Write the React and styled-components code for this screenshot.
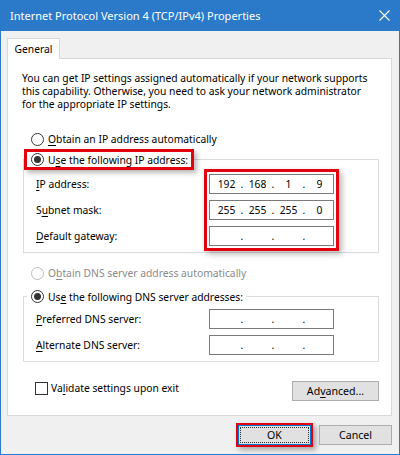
import styled, { createGlobalStyle } from "styled-components"

const GlobalStyle = createGlobalStyle`
  html, body {
    margin: 0;
    padding: 0;
    background: #fff;
  }
  body {
    font-family: "Noto Sans", "Open Sans", sans-serif;
    font-size: 10.3px;
    color: #000;
  }
`

const Window = styled.div`
  width: 400px;
  height: 455px;
  box-sizing: border-box;
  border: 1px solid #2b7ac9;
  border-top: 0;
  background: #f0f0f0;
  display: flex;
  flex-direction: column;
`

const TitleBar = styled.div`
  height: 31px;
  flex: none;
  background: #2b7ac9;
  color: #fff;
  font-size: 11px;
  display: flex;
  align-items: center;
  justify-content: space-between;
  padding: 0 9px 0 9px;
`

const Body = styled.div`
  flex: 1;
  display: flex;
  flex-direction: column;
  padding: 7px 7px 0 6px;
`

const Tab = styled.div`
  align-self: flex-start;
  width: 53px;
  height: 21px;
  box-sizing: border-box;
  margin-bottom: -1px;
  position: relative;
  background: #fff;
  border: 1px solid #d9d9d9;
  border-bottom: 0;
  display: flex;
  align-items: center;
  justify-content: center;
  padding-bottom: 1px;
`

const Panel = styled.div`
  height: 358px;
  box-sizing: border-box;
  background: #fff;
  border: 1px solid #d9d9d9;
  padding: 13px 12px 0 14px;
  display: flex;
  flex-direction: column;
  white-space: nowrap;
`

const Description = styled.p`
  margin: 0;
  line-height: 13px;
`

const Option = styled.label`
  display: flex;
  align-items: center;
  gap: ${p => p.$gap || 4}px;
  height: 16px;
  padding-left: ${p => p.$indent ?? 9}px;
  margin-top: ${p => p.$top || 0}px;
  color: ${p => (p.$disabled ? "#8a8a8a" : "#000")};
`

const Radio = styled.span`
  flex: none;
  width: 13px;
  height: 13px;
  box-sizing: border-box;
  border-radius: 50%;
  border: 1px solid ${p => (p.$disabled ? "#bcbcbc" : "#333")};
  background: #fff;
  display: flex;
  align-items: center;
  justify-content: center;
  &::after {
    content: "";
    display: ${p => (p.$checked ? "block" : "none")};
    width: 7px;
    height: 7px;
    border-radius: 50%;
    background: #333;
  }
`

const Check = styled.span`
  flex: none;
  width: 13px;
  height: 13px;
  box-sizing: border-box;
  border: 1px solid #333;
  background: #fff;
`

const Key = styled.u`
  text-decoration-thickness: 1px;
  text-underline-offset: 2px;
`

const Group = styled.fieldset`
  margin: ${p => p.$top || 0}px 0 0 1px;
  padding: ${p => p.$padTop || 7}px 12px 6px 12px;
  border: 1px solid #dcdcdc;
  min-width: 0;
`

const Legend = styled.legend`
  margin-left: -9px;
  padding: 0 3px 0 4px;
  height: 15px;
  display: flex;
  align-items: center;
  box-shadow: ${p =>
    p.$marked
      ? "0 0 0 3px #e3000f, 3px 3px 5px 3px rgba(0,0,0,0.28)"
      : "none"};
`

const FormBlock = styled.div`
  display: flex;
`

const Labels = styled.div`
  width: 173px;
  display: flex;
  flex-direction: column;
  gap: 6px;
`

const LabelCell = styled.div`
  height: 20px;
  display: flex;
  align-items: center;
`

const Fields = styled.div`
  display: flex;
  flex-direction: column;
  gap: 6px;
  box-shadow: ${p =>
    p.$marked
      ? "0 0 0 2px #fff, 0 0 0 5px #e3000f, 3px 3px 6px 5px rgba(0,0,0,0.28)"
      : "none"};
`

const IpBox = styled.div`
  width: 125px;
  height: 20px;
  box-sizing: border-box;
  border: 1px solid #7a7a7a;
  background: #fff;
  display: flex;
  align-items: center;
  padding-left: 3px;
`

const Octet = styled.span`
  flex: 1;
  text-align: center;
`

const Dot = styled.span`
  width: 4px;
  text-align: center;
`

const BottomRow = styled.div`
  display: flex;
  justify-content: space-between;
  align-items: flex-start;
  margin-top: 18px;
`

const Button = styled.button`
  width: ${p => p.$w || 73}px;
  height: 20px;
  margin-top: ${p => p.$top || 0}px;
  box-sizing: border-box;
  padding: 0;
  font: inherit;
  font-size: 10.6px;
  color: #000;
  background: #e1e1e1;
  border: 1px solid ${p => (p.$default ? "#0078d7" : "#adadad")};
  display: flex;
  align-items: center;
  justify-content: center;
  position: relative;
  ${p =>
    p.$default &&
    `
    &::before {
      content: "";
      position: absolute;
      inset: 1px;
      border: 1px dotted #333;
    }
  `}
  box-shadow: ${p =>
    p.$marked
      ? "0 0 0 2px #e3000f, 3px 3px 5px 2px rgba(0,0,0,0.3)"
      : "none"};
`

const Footer = styled.div`
  display: flex;
  justify-content: flex-end;
  gap: 8px;
  padding: 9px 0 0 0;
`

const CloseIcon = () => (
  <svg width="11" height="11" viewBox="0 0 11 11">
    <path d="M0.5 0.5 L10.5 10.5 M10.5 0.5 L0.5 10.5" stroke="#fff" strokeWidth="1.1" />
  </svg>
)

const IpField = ({ value = ["", "", "", ""] }) => (
  <IpBox>
    <Octet>{value[0]}</Octet>
    <Dot>.</Dot>
    <Octet>{value[1]}</Octet>
    <Dot>.</Dot>
    <Octet>{value[2]}</Octet>
    <Dot>.</Dot>
    <Octet>{value[3]}</Octet>
  </IpBox>
)

export default function App() {
  return (
    <>
      <GlobalStyle />
      <Window>
        <TitleBar>
          <span>Internet Protocol Version 4 (TCP/IPv4) Properties</span>
          <CloseIcon />
        </TitleBar>
        <Body>
          <Tab>General</Tab>
          <Panel>
            <Description>
              You can get IP settings assigned automatically if your network supports
              <br />
              this capability. Otherwise, you need to ask your network administrator
              <br />
              for the appropriate IP settings.
            </Description>

            <Option $top={20}>
              <Radio />
              <span><Key>O</Key>btain an IP address automatically</span>
            </Option>

            <Group $top={5}>
              <Legend $marked>
                <Option $indent={0}>
                  <Radio $checked />
                  <span>U<Key>s</Key>e the following IP address:</span>
                </Option>
              </Legend>
              <FormBlock>
                <Labels>
                  <LabelCell><span><Key>I</Key>P address:</span></LabelCell>
                  <LabelCell><span>S<Key>u</Key>bnet mask:</span></LabelCell>
                  <LabelCell><span><Key>D</Key>efault gateway:</span></LabelCell>
                </Labels>
                <Fields $marked>
                  <IpField value={["192", "168", "1", "9"]} />
                  <IpField value={["255", "255", "255", "0"]} />
                  <IpField />
                </Fields>
              </FormBlock>
            </Group>

            <Option $top={12} $disabled>
              <Radio $disabled />
              <span>O<Key>b</Key>tain DNS server address automatically</span>
            </Option>

            <Group $top={8} $padTop={5}>
              <Legend>
                <Option $indent={0}>
                  <Radio $checked />
                  <span>Us<Key>e</Key> the following DNS server addresses:</span>
                </Option>
              </Legend>
              <FormBlock>
                <Labels>
                  <LabelCell><span><Key>P</Key>referred DNS server:</span></LabelCell>
                  <LabelCell><span><Key>A</Key>lternate DNS server:</span></LabelCell>
                </Labels>
                <Fields>
                  <IpField />
                  <IpField />
                </Fields>
              </FormBlock>
            </Group>

            <BottomRow>
              <Option $indent={13} $gap={3}>
                <Check />
                <span>Va<Key>l</Key>idate settings upon exit</span>
              </Option>
              <Button $w={87} $top={1}>
                <span>Ad<Key>v</Key>anced...</span>
              </Button>
            </BottomRow>
          </Panel>
          <Footer>
            <Button $default $marked>OK</Button>
            <Button>Cancel</Button>
          </Footer>
        </Body>
      </Window>
    </>
  )
}
